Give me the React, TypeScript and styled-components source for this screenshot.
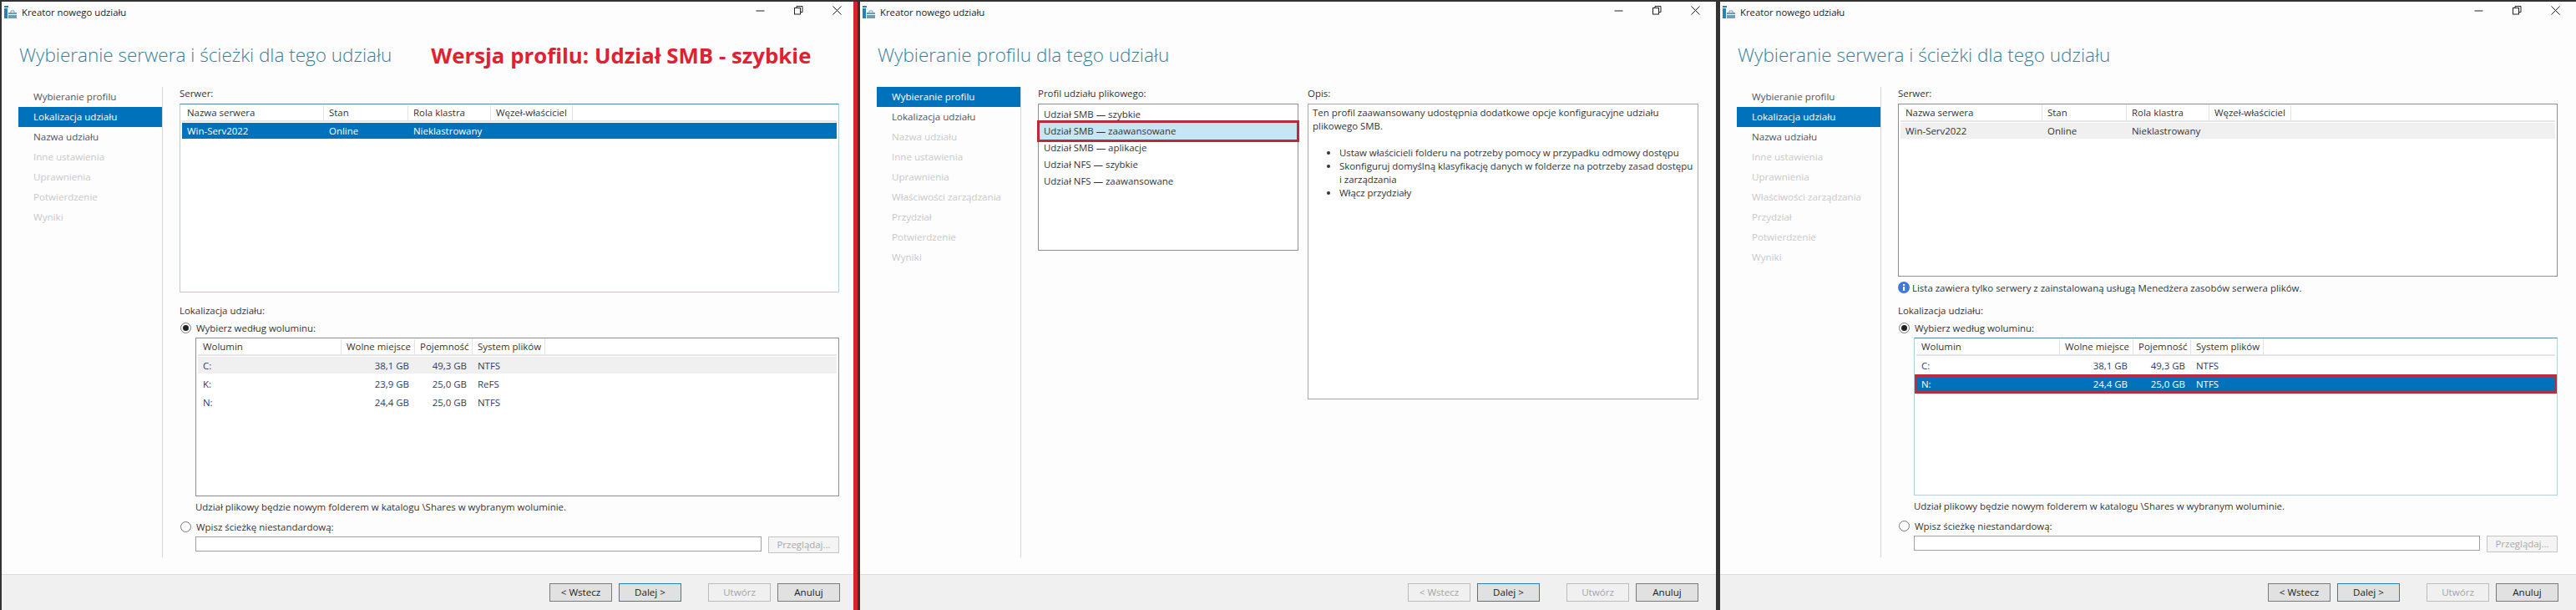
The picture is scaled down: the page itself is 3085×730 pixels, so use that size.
import React from "react";
import styled, { createGlobalStyle } from "styled-components";

const Global = createGlobalStyle`
  html, body { margin: 0; padding: 0; background: #333; }
  body { width: 3085px; height: 730px; overflow: hidden; font-family: "Open Sans", "Noto Sans", sans-serif; font-size: 11.45px; color: #333; }
`;

const Page = styled.div`
  width: 3085px; height: 730px; display: flex; background: #333; padding-top: 2px; box-sizing: border-box;
`;
const Win = styled.div<{ $w: number; $ml: number }>`
  width: ${(p) => p.$w}px; margin-left: ${(p) => p.$ml}px; height: 728px; background: #fdfdfd; display: flex; flex-direction: column; flex: none; overflow: hidden;
`;
const RedBar = styled.div`
  width: 5px; height: 728px; background: #d8232a; flex: none;
`;
const TitleBar = styled.div`
  height: 24px; display: flex; align-items: center; padding-left: 3px; width: 1003px; flex: none; box-sizing: content-box;
`;
const TitleText = styled.span`
  margin-left: 6px; font-size: 11.3px; color: #222; flex: 1; white-space: nowrap;
`;
const Controls = styled.div`
  display: flex; align-items: center; gap: 35px; padding-bottom: 4px;
`;
const Head = styled.div`
  height: 78px; flex: none; display: flex; align-items: center; padding-left: 21px; gap: 47px; box-sizing: border-box; padding-top: 1px;
`;
const H1 = styled.h1`
  margin: 0; font-family: "Open Sans", sans-serif; font-weight: 300; font-size: 22.5px; color: #3a7f98; white-space: nowrap;
`;
const Callout = styled.div`
  font-family: "Open Sans", sans-serif; font-weight: 700; font-size: 25.8px; color: #de2232; white-space: nowrap;
`;
const Body = styled.div`
  display: flex; height: 563px; margin-bottom: 20px; flex: none;
`;
const Side = styled.div`
  width: 172px; margin-left: 20px; flex: none; display: flex; flex-direction: column; border-right: 1px solid #d4d4d4;
`;
const Step = styled.div<{ $s: "on" | "done" | "off" }>`
  height: 24px; line-height: 24px; padding-left: 18px; font-size: 11.6px; white-space: nowrap;
  background: ${(p) => (p.$s === "on" ? "#0072bc" : "transparent")};
  color: ${(p) => (p.$s === "on" ? "#fff" : p.$s === "done" ? "#555" : "#c9c9c9")};
`;
const Main = styled.div`
  margin-left: 20px; width: 790px; flex: none; display: flex; flex-direction: column; color: #333;
`;
const Label = styled.div<{ $mt?: number }>`
  height: 16px; line-height: 16px; margin-top: ${(p) => p.$mt ?? 0}px; white-space: nowrap; color: #333;
`;
const Box = styled.div<{ $h: number; $ml?: number; $mt?: number; $accent?: boolean; $flush?: boolean }>`
  height: ${(p) => p.$h}px; margin-left: ${(p) => p.$ml ?? 0}px; margin-top: ${(p) => p.$mt ?? 0}px; box-sizing: border-box;
  border: 1px solid ${(p) => (p.$accent ? "#b4d0de" : "#8f8f8f")};
  ${(p) => (p.$accent ? "border-top-color: #4f8ba8;" : "")}
  background: #fff; padding: ${(p) => (p.$flush ? "2px 0" : "1px 2px")}; position: relative; flex: none;
`;
const HeadRow = styled.div<{ $cols: string }>`
  height: 20px; box-sizing: border-box; display: grid; grid-template-columns: ${(p) => p.$cols}; border-bottom: 2px solid #e6e6e6; margin-bottom: 1px;
`;
const HCell = styled.div<{ $r?: boolean }>`
  line-height: 18px; padding: 0 6px; border-right: 1px solid #e3e3e3; white-space: nowrap; color: #333; text-align: ${(p) => (p.$r ? "right" : "left")}; overflow: hidden;
`;
const DataRow = styled.div<{ $cols: string; $mode?: "blue" | "grey" | "red"; $h: number; $c?: string }>`
  height: ${(p) => p.$h}px; display: grid; grid-template-columns: ${(p) => p.$cols}; align-items: center; box-sizing: border-box;
  background: ${(p) => (p.$mode === "blue" || p.$mode === "red" ? "#0072bc" : p.$mode === "grey" ? "#f0f0f0" : "transparent")};
  color: ${(p) => (p.$mode === "blue" || p.$mode === "red" ? "#fff" : p.$c ?? "#333")};
  ${(p) => (p.$mode === "red" ? "outline: 3px solid #c02a3e; outline-offset: -3px; margin: 0 -2px; padding: 0 2px;" : "")}
`;
const DCell = styled.div<{ $r?: boolean }>`
  padding: 0 7px 0 6px; white-space: nowrap; text-align: ${(p) => (p.$r ? "right" : "left")};
`;
const RadioRow = styled.div<{ $mt: number }>`
  display: flex; align-items: center; gap: 6px; height: 16px; margin-top: ${(p) => p.$mt}px; padding-left: 1px; white-space: nowrap;
`;
const RadioDot = styled.span<{ $on?: boolean }>`
  width: 11px; height: 11px; border: 1px solid #777; border-radius: 50%; background: #fff; flex: none; display: flex; align-items: center; justify-content: center;
  &::after { content: ""; width: 7px; height: 7px; border-radius: 50%; background: ${(p) => (p.$on ? "#222" : "transparent")}; }
`;
const Note = styled.div`
  margin: 5px 0 0 19px; height: 16px; line-height: 16px; white-space: nowrap;
`;
const PathRow = styled.div`
  display: flex; margin: 4px 0 0 19px; gap: 8px; align-items: flex-start;
`;
const PathInput = styled.div`
  width: 678px; height: 18px; border: 1px solid #a0a0a0; background: #fff; box-sizing: border-box; flex: none;
`;
const Browse = styled.div`
  width: 85px; height: 20px; border: 1px solid #c4c4c4; background: #f4f4f4; color: #aaa; box-sizing: border-box; text-align: center; line-height: 18px; flex: none;
`;
const Info = styled.div`
  height: 16px; display: flex; align-items: center; gap: 2px; margin-top: 5px; white-space: nowrap;
`;
const Foot = styled.div`
  flex: 1; background: #f0f0f0; border-top: 1px solid #dcdcdc; display: flex; align-items: flex-start; padding-top: 10px; width: 100%;
`;
const FootInner = styled.div`
  width: 1004px; display: flex; justify-content: flex-end; gap: 8px; flex: none;
`;
const Btn = styled.div<{ $k?: "focus" | "off"; $gap?: boolean }>`
  width: 75px; height: 22px; box-sizing: border-box; text-align: center; line-height: 20px; font-size: 11.6px; flex: none;
  margin-left: ${(p) => (p.$gap ? 24 : 0)}px;
  border: 1px solid ${(p) => (p.$k === "focus" ? "#2a7fb5" : p.$k === "off" ? "#bcbcbc" : "#7a7a7a")};
  background: ${(p) => (p.$k === "off" ? "#f0f0f0" : "#e1e1e1")};
  color: ${(p) => (p.$k === "off" ? "#a5a5a5" : "#222")};
`;
const Cols = styled.div`
  display: flex; gap: 11px;
`;
const Col = styled.div<{ $w: number }>`
  width: ${(p) => p.$w}px; flex: none; display: flex; flex-direction: column;
`;
const Profile = styled.div<{ $sel?: boolean }>`
  height: 20px; line-height: 20px; padding-left: 6px; white-space: nowrap; position: relative;
  ${(p) => (p.$sel ? "background: #c7e6f5; outline: 3px solid #b92a3f; outline-offset: 0; margin: 0 1px; padding-left: 5px; z-index: 1;" : "")}
`;
const DescBox = styled.div`
  height: 354px; box-sizing: border-box; border: 1px solid #a8a8a8; background: #fff; padding: 2px 0 2px 5px; line-height: 16px; margin-top: 4px;
`;
const Para = styled.p`
  margin: 0 0 16px; line-height: 16px;
`;
const BulletList = styled.ul`
  margin: 0; padding: 0 2px 0 32px; line-height: 16px; letter-spacing: -0.03px;
`;

const Icon = () => (
  <svg width="15" height="15" viewBox="0 0 15 15">
    <rect x="0" y="0" width="5" height="2" fill="#2a7fb5" />
    <rect x="0" y="3" width="4" height="12" fill="#2a7fb5" />
    <path d="M5 8h10v7H5z" fill="#6f9db4" />
    <path d="M8 8V6h4v2" fill="none" stroke="#6f9db4" strokeWidth="1" />
    <rect x="5" y="10" width="10" height="1" fill="#e8f1f6" />
  </svg>
);
const WinCtl = () => (
  <Controls>
    <svg width="11" height="11" viewBox="0 0 11 11"><path d="M0.5 6h10" stroke="#222" /></svg>
    <svg width="11" height="11" viewBox="0 0 11 11" fill="none" stroke="#222"><rect x="0.5" y="2.5" width="7" height="7.5" /><path d="M3 2.5V0.5h7v7H7.5" /></svg>
    <svg width="11" height="11" viewBox="0 0 11 11" fill="none" stroke="#222"><path d="M0.5 0.5l10 10M10.5 0.5l-10 10" /></svg>
  </Controls>
);
const InfoIcon = () => (
  <svg width="15" height="14" viewBox="0 0 15 14">
    <circle cx="7" cy="7" r="7" fill="#3f78d8" />
    <rect x="6" y="6" width="2.2" height="5" fill="#fff" />
    <rect x="6" y="3" width="2.2" height="2" fill="#fff" />
  </svg>
);

const steps2 = ["Wybieranie profilu", "Lokalizacja udziału", "Nazwa udziału", "Inne ustawienia", "Uprawnienia", "Właściwości zarządzania", "Przydział", "Potwierdzenie", "Wyniki"];

const Sidebar = ({ items, on }: { items: string[]; on: number }) => (
  <Side>
    {items.map((t, i) => (
      <Step key={t} $s={i === on ? "on" : i < 3 && (on > 0 || i === 1) ? "done" : "off"}>{t}</Step>
    ))}
  </Side>
);

const srvCols = "170px 101px 99px 98px 1fr";
const volCols = "172px 88px 69px 87px 1fr";

const ServerTable = ({ h, mode, accent }: { h: number; mode: "blue" | "grey"; accent?: boolean }) => (
  <Box $h={h} $mt={4} $accent={accent}>
    <HeadRow $cols={srvCols}>
      <HCell>Nazwa serwera</HCell><HCell>Stan</HCell><HCell>Rola klastra</HCell><HCell>Węzeł-właściciel</HCell><div />
    </HeadRow>
    <DataRow $cols={srvCols} $mode={mode} $h={19}>
      <DCell>Win-Serv2022</DCell><DCell>Online</DCell><DCell>Nieklastrowany</DCell>
    </DataRow>
  </Box>
);

const VolRow = ({ v, f, c, s, mode, h }: { v: string; f: string; c: string; s: string; mode?: "grey" | "red"; h: number }) => (
  <DataRow $cols={volCols} $mode={mode} $h={h} $c="#2c3e63">
    <DCell>{v}</DCell><DCell $r>{f}</DCell><DCell $r>{c}</DCell><DCell>{s}</DCell>
  </DataRow>
);

const Location = ({ third }: { third: boolean }) => (
  <>
    <RadioRow $mt={4}><RadioDot $on />Wybierz według woluminu:</RadioRow>
    <Box $h={third ? 189 : 190} $ml={19} $mt={4} $accent={third}>
      <HeadRow $cols={volCols}>
        <HCell>Wolumin</HCell><HCell $r>Wolne miejsce</HCell><HCell $r>Pojemność</HCell><HCell>System plików</HCell><div />
      </HeadRow>
      {third ? (
        <>
          <VolRow v="C:" f="38,1 GB" c="49,3 GB" s="NTFS" h={21} />
          <VolRow v="N:" f="24,4 GB" c="25,0 GB" s="NTFS" mode="red" h={23} />
        </>
      ) : (
        <>
          <VolRow v="C:" f="38,1 GB" c="49,3 GB" s="NTFS" mode="grey" h={20} />
          <VolRow v="K:" f="23,9 GB" c="25,0 GB" s="ReFS" h={24} />
          <VolRow v="N:" f="24,4 GB" c="25,0 GB" s="NTFS" h={20} />
        </>
      )}
    </Box>
    <Note>Udział plikowy będzie nowym folderem w katalogu \Shares w wybranym woluminie.</Note>
    <RadioRow $mt={7}><RadioDot />Wpisz ścieżkę niestandardową:</RadioRow>
    <PathRow><PathInput /><Browse>Przeglądaj...</Browse></PathRow>
  </>
);

const Footer = ({ backOff }: { backOff?: boolean }) => (
  <Foot>
    <FootInner>
      <Btn $k={backOff ? "off" : undefined}>&lt; Wstecz</Btn>
      <Btn $k="focus">Dalej &gt;</Btn>
      <Btn $k="off" $gap>Utwórz</Btn>
      <Btn>Anuluj</Btn>
    </FootInner>
  </Foot>
);

const Frame = ({ w, ml, title, callout, backOff, children }: { w: number; ml: number; title: string; callout?: string; backOff?: boolean; children: React.ReactNode }) => (
  <Win $w={w} $ml={ml}>
    <TitleBar>
      <Icon /><TitleText>Kreator nowego udziału</TitleText><WinCtl />
    </TitleBar>
    <Head><H1>{title}</H1>{callout && <Callout>{callout}</Callout>}</Head>
    {children}
    <Footer backOff={backOff} />
  </Win>
);

export default function App() {
  return (
    <Page>
      <Global />
      <Frame w={1020} ml={2} title="Wybieranie serwera i ścieżki dla tego udziału" callout="Wersja profilu: Udział SMB - szybkie">
        <Body>
          <Sidebar items={["Wybieranie profilu", "Lokalizacja udziału", "Nazwa udziału", "Inne ustawienia", "Uprawnienia", "Potwierdzenie", "Wyniki"]} on={1} />
          <Main>
            <Label>Serwer:</Label>
            <ServerTable h={226} mode="blue" accent />
            <Label $mt={14}>Lokalizacja udziału:</Label>
            <Location third={false} />
          </Main>
        </Body>
      </Frame>
      <RedBar />
      <Frame w={1025} ml={3} title="Wybieranie profilu dla tego udziału" backOff>
        <Body>
          <Sidebar items={steps2} on={0} />
          <Main>
            <Cols>
              <Col $w={312}>
                <Label>Profil udziału plikowego:</Label>
                <Box $h={176} $mt={4} $flush>
                  <Profile>Udział SMB — szybkie</Profile>
                  <Profile $sel>Udział SMB — zaawansowane</Profile>
                  <Profile>Udział SMB — aplikacje</Profile>
                  <Profile>Udział NFS — szybkie</Profile>
                  <Profile>Udział NFS — zaawansowane</Profile>
                </Box>
              </Col>
              <Col $w={468}>
                <Label>Opis:</Label>
                <DescBox>
                  <Para>Ten profil zaawansowany udostępnia dodatkowe opcje konfiguracyjne udziału plikowego SMB.</Para>
                  <BulletList>
                    <li>Ustaw właścicieli folderu na potrzeby pomocy w przypadku odmowy dostępu</li>
                    <li>Skonfiguruj domyślną klasyfikację danych w folderze na potrzeby zasad dostępu i zarządzania</li>
                    <li>Włącz przydziały</li>
                  </BulletList>
                </DescBox>
              </Col>
            </Cols>
          </Main>
        </Body>
      </Frame>
      <Frame w={1025} ml={5} title="Wybieranie serwera i ścieżki dla tego udziału">
        <Body>
          <Sidebar items={steps2} on={1} />
          <Main>
            <Label>Serwer:</Label>
            <ServerTable h={207} mode="grey" />
            <Info><InfoIcon />Lista zawiera tylko serwery z zainstalowaną usługą Menedżera zasobów serwera plików.</Info>
            <Label $mt={12}>Lokalizacja udziału:</Label>
            <Location third />
          </Main>
        </Body>
      </Frame>
    </Page>
  );
}
